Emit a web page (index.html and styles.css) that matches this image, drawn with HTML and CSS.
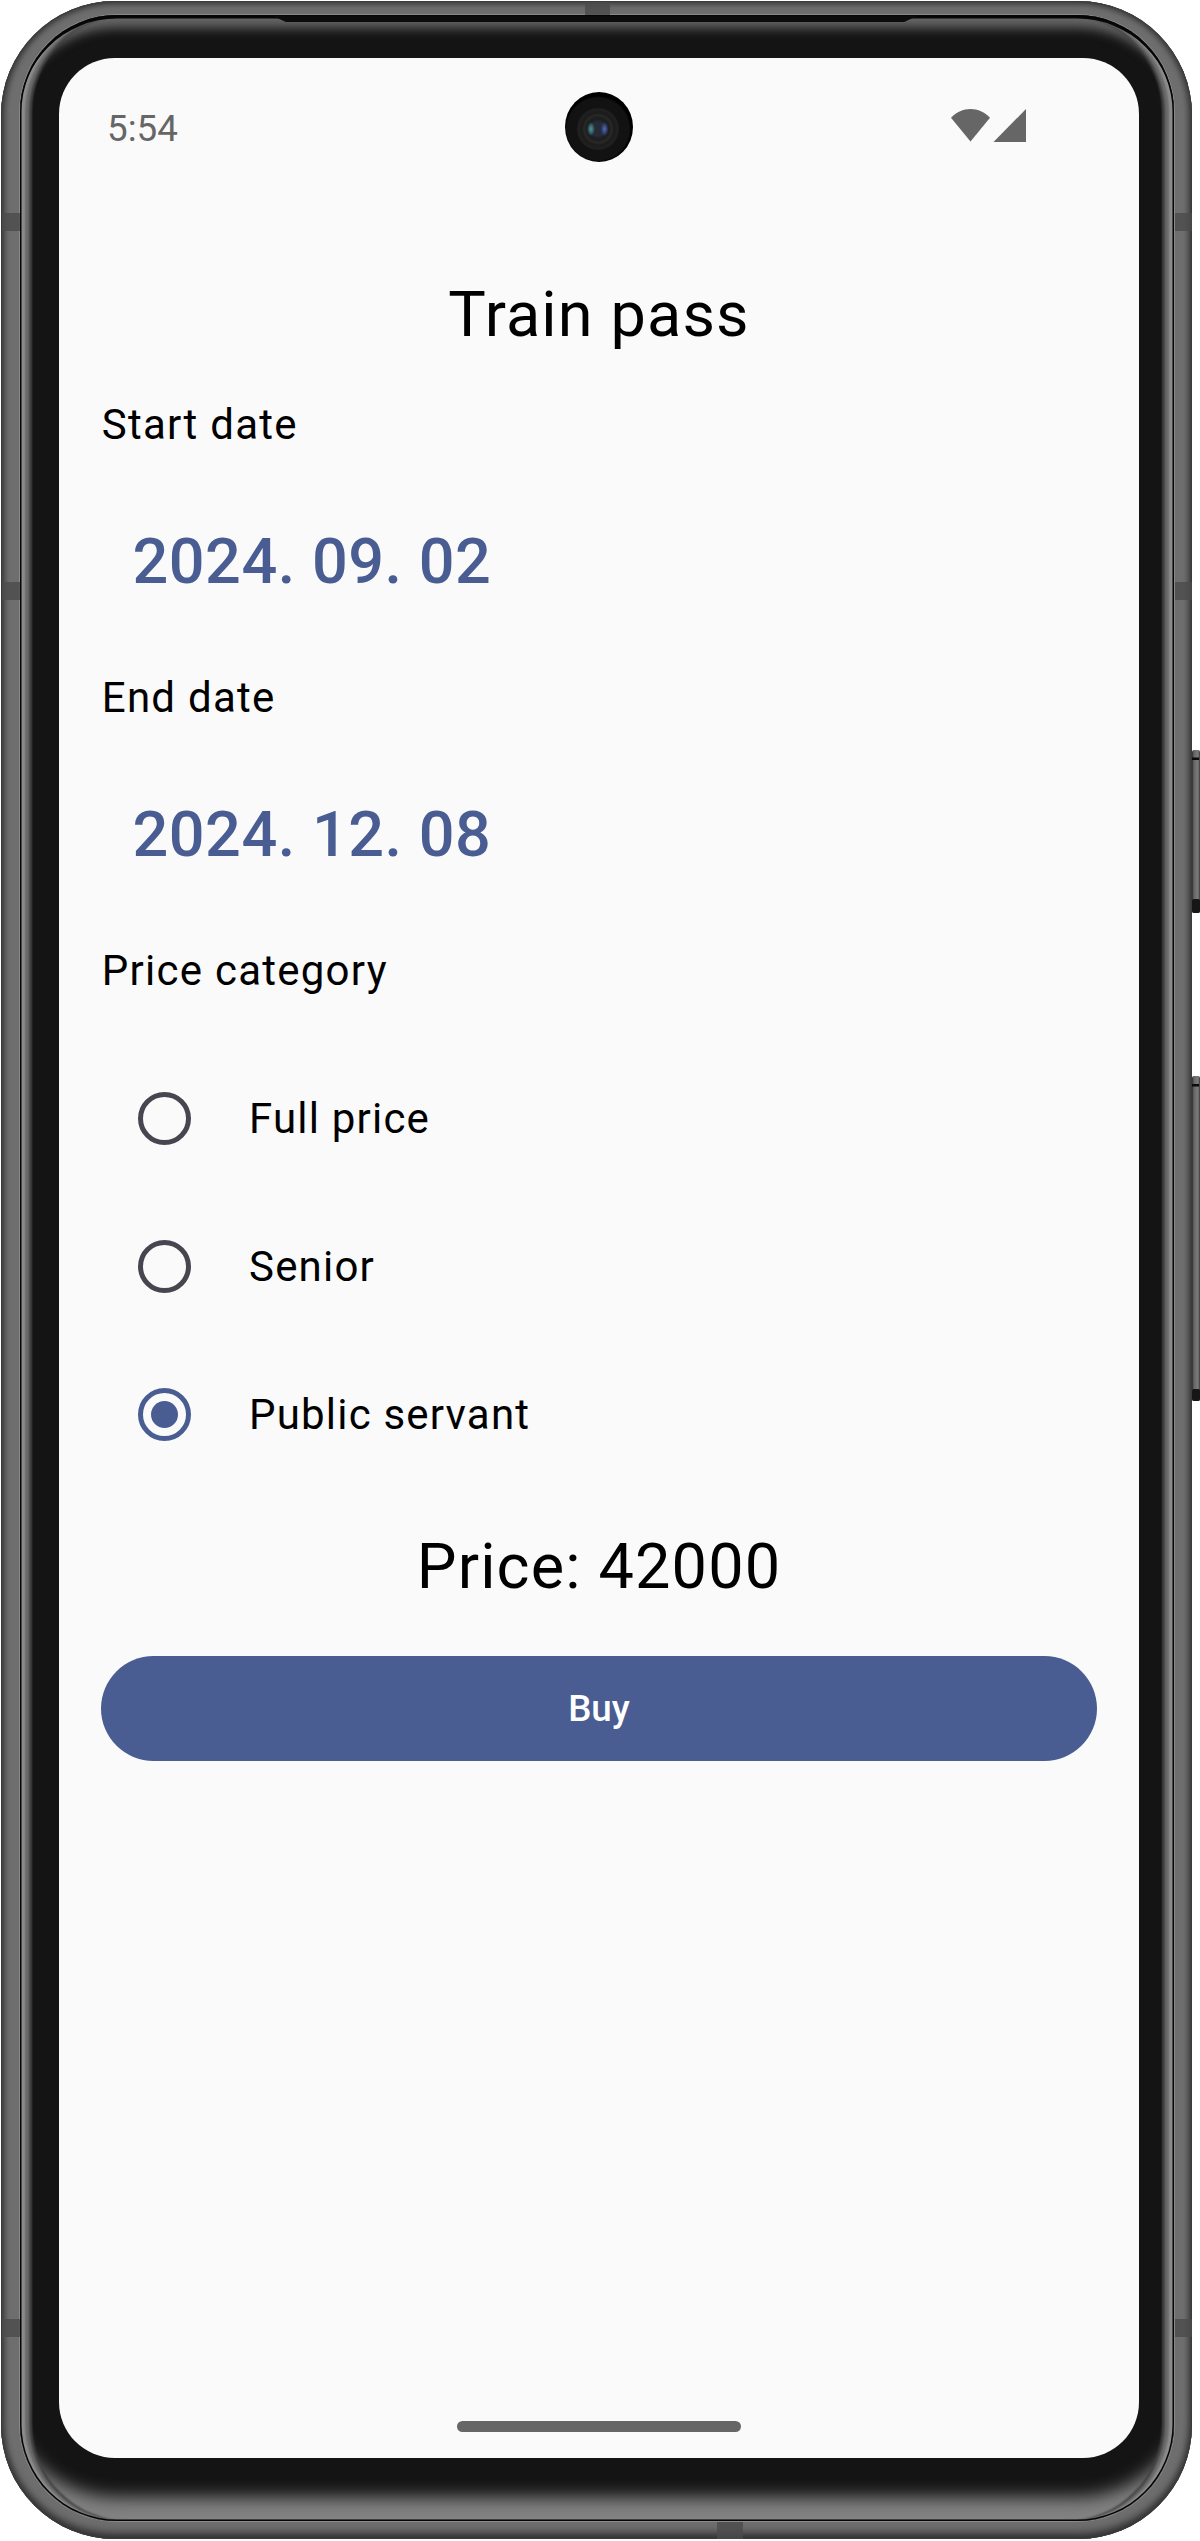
FILE: index.html
```html
<!DOCTYPE html>
<html lang="en">
<head>
<meta charset="utf-8">
<title>Train pass</title>
<link rel="stylesheet" href="styles.css">
</head>
<body>
<div class="device">
  <svg class="side-keys" viewBox="0 0 12 680" aria-hidden="true">
    <defs><linearGradient id="key" x1="0" x2="1" y1="0" y2="0"><stop offset="0" stop-color="#2c2c2c"/><stop offset=".25" stop-color="#666"/><stop offset=".7" stop-color="#7a7a7a"/><stop offset=".85" stop-color="#666"/><stop offset="1" stop-color="#333"/></linearGradient></defs>
    <rect x="0" y="0" width="8" height="163" rx="2" fill="url(#key)"/>
    <rect x="0" y="7.500" width="7" height="2.500" fill="#0b0b0b"/>
    <rect x="0" y="149" width="8" height="14" rx="2" fill="#161616"/>
    <rect x="0" y="326" width="8" height="325" rx="2" fill="url(#key)"/>
    <rect x="0" y="334" width="7" height="2.500" fill="#0b0b0b"/>
    <rect x="0" y="639" width="8" height="12" rx="2" fill="#161616"/>
  </svg>
  <div class="frame">
    <div class="glass">
      <div class="screen">
        <header class="status">
          <span class="clock">5:54</span>
          <svg class="signals" viewBox="0 0 76 34" aria-hidden="true">
            <path d="M1 9.800C11.500-1.900 29.500-1.900 40 9.800L20.500 33.500Z" fill="#666"/>
            <path d="M76 1V34H43.500Z" fill="#666"/>
          </svg>
          <div class="camera"></div>
        </header>
        <main class="content">
          <h1 class="headline">Train pass</h1>
          <p class="label">Start date</p>
          <button class="date">2024. 09. 02</button>
          <p class="label">End date</p>
          <button class="date">2024. 12. 08</button>
          <p class="label">Price category</p>
          <div class="options">
            <div class="option"><span class="radio"></span>Full price</div>
            <div class="option"><span class="radio"></span>Senior</div>
            <div class="option"><span class="radio checked"></span>Public servant</div>
          </div>
          <p class="headline price">Price: 42000</p>
          <button class="buy">Buy</button>
        </main>
        <div class="home-bar"></div>
      </div>
    </div>
  </div>
  <div class="speaker"></div>
  <i class="band band-top"></i>
  <i class="band band-bottom"></i>
  <i class="band left upper"></i>
  <i class="band left middle"></i>
  <i class="band left lower"></i>
  <i class="band right upper"></i>
  <i class="band right middle"></i>
  <i class="band right lower"></i>
</div>
</body>
</html>
```
FILE: styles.css
```css
* { box-sizing: border-box; }
body { margin: 0; background: #fff; font-family: Roboto, "Liberation Sans", sans-serif; color: #000; }
h1, p { margin: 0; font-weight: 400; }
button { border: 0; padding: 0; font-family: inherit; background: none; }

.device { position: relative; width: 1200px; height: 2541px; overflow: hidden; padding: 1px 0 2px 1px; }
.frame {
  position: relative; width: 1191px; height: 2538px; padding: 14px 18px 18px 19px;
  border-radius: 114px; background: #6e6e6e;
  box-shadow: inset 0 0 1px 1px #3a3a3a, inset 0 3px 6px #3c413d, inset 0 -8px 8px -2px #333, inset 4px 0 5px #4c4c4c, inset -4px 0 5px #4c4c4c;
}
.glass {
  width: 1154px; height: 2506px; padding: 43px 39px 63px;
  border-radius: 97px; background: #141414;
  box-shadow:
    0 0 0 1px #8a8a8a,
    inset 0 0 0 1.5px #050505,
    inset 0 3.500px 0 #080808,
    inset 5px 0 2px #8c8c8c, inset -5px 0 2px #8c8c8c,
    inset 9px 0 2px #6a6a6a, inset -9px 0 2px #6a6a6a,
    inset 12px 0 2px #424242, inset -12px 0 2px #424242,
    inset 0 24px 11px -11px #666,
    inset 0 -41px 17px -17px #828282;
}
.screen {
  position: relative; width: 1080px; height: 2400px; border-radius: 56px; background: #fafafa;
  display: flex; flex-direction: column;
}
.status { position: relative; height: 136px; padding: 0 113px 0 48px; display: flex; justify-content: space-between; align-items: flex-start; }
.clock { margin-top: 48.500px; font-size: 36.750px; line-height: 44px; color: #666; }
.signals { width: 76px; height: 34px; margin-top: 50px; }
.camera {
  position: absolute; left: 506px; top: 34px; width: 68px; height: 70px; border-radius: 50%;
  background:
    radial-gradient(ellipse 4px 7px at 26px 37px, #4b9696 0, #3a6d72 45%, transparent),
    radial-gradient(ellipse 4px 7px at 39.500px 37px, #526cc4 0, #3b4a83 45%, transparent),
    radial-gradient(circle at 33px 37px, #252b37 0 7px, #1c1d21 10px, #202020 12px, #292929 14px, #1b1b1b 16px, #212121 20px, #121212 21.500px 31px, #000 33px);
}
.content { padding: 0 42px; display: flex; flex-direction: column; align-items: stretch; }
.headline { margin: 58px 0 15px; height: 126px; line-height: 126px; font-size: 63px; letter-spacing: 1.150px; text-align: center; white-space: nowrap; }
.label { height: 63px; line-height: 63px; padding-left: .8px; font-size: 42px; letter-spacing: 1.250px; }
.date { align-self: flex-start; margin: 42px 0; height: 126px; padding: 1px 31.500px 0; line-height: 126px; font-size: 63px; font-weight: 500; letter-spacing: .5px; color: #495d92; }
.options { display: flex; flex-direction: column; margin-top: 42px; }
.option { height: 148.200px; display: flex; align-items: center; font-size: 42px; letter-spacing: 1.200px; }
.radio { width: 53px; height: 53px; margin: 0 58px 0 37px; border: 5.250px solid #45464f; border-radius: 50%; display: grid; place-items: center; }
.radio.checked { border-color: #495d92; }
.radio.checked::after { content: ""; width: 27px; height: 27px; border-radius: 50%; background: #495d92; }
.price { margin: 15px 0 26.400px; }
.buy { height: 105px; border-radius: 52.500px; background: #495d92; color: #fff; font-size: 36.750px; font-weight: 500; letter-spacing: 0; }
.home-bar { width: 284px; height: 11px; border-radius: 6px; background: #666; margin: auto auto 26px; }

.speaker { position: absolute; left: 273px; top: 16px; width: 644px; height: 6px; background: #0c0c0c; clip-path: polygon(0 0, 100% 0, 98% 100%, 2% 100%); }
.band { position: absolute; background: rgba(75, 75, 75, .8); }
.left, .right { width: 18px; height: 18px; }
.left { left: 2px; }
.right { left: 1175px; width: 17px; }
.upper { top: 213px; }
.middle { top: 582px; }
.lower { top: 2319px; }
.band-top { left: 585px; top: 2px; width: 25px; height: 13px; }
.band-bottom { left: 717px; top: 2522px; width: 26px; height: 17px; }
.side-keys { position: absolute; left: 1191.500px; top: 750px; width: 12px; height: 680px; }
```
